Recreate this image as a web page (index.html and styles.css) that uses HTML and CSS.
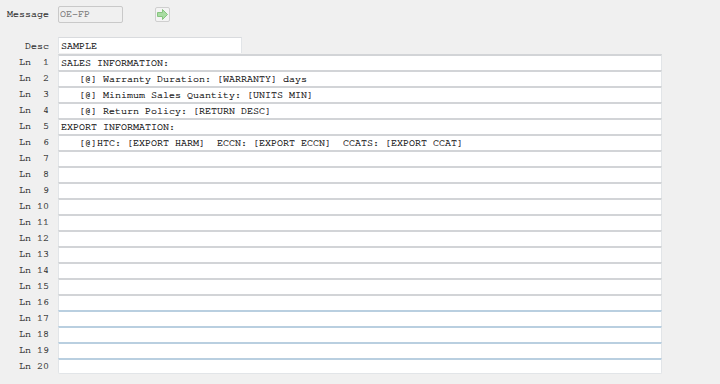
FILE: index.html
```html
<!DOCTYPE html>
<html>
<head>
<meta charset="utf-8">
<link rel="stylesheet" href="styles.css">
</head>
<body>
<div class="top">
  <span class="lbl">Message</span>
  <div class="msg">OE-FP</div>
  <div class="go"><svg width="13" height="13" viewBox="0 0 13 13"><path d="M1.5 4.5 H6.5 V1.5 L11.5 6.5 L6.5 11.5 V8.5 H1.5 Z" fill="#a9dca2" stroke="#86c47f" stroke-width="1"/></svg></div>
</div>
<div class="form">
  <span class="lbl desc-l">Desc</span>
  <div class="field desc">SAMPLE</div>
  <span class="lbl">Ln  1</span><div class="field">SALES INFORMATION:</div>
  <span class="lbl">Ln  2</span><div class="field">   [@] Warranty Duration: [WARRANTY] days</div>
  <span class="lbl">Ln  3</span><div class="field">   [@] Minimum Sales Quantity: [UNITS MIN]</div>
  <span class="lbl">Ln  4</span><div class="field">   [@] Return Policy: [RETURN DESC]</div>
  <span class="lbl">Ln  5</span><div class="field">EXPORT INFORMATION:</div>
  <span class="lbl">Ln  6</span><div class="field">   [@]HTC: [EXPORT HARM]  ECCN: [EXPORT ECCN]  CCATS: [EXPORT CCAT]</div>
  <span class="lbl">Ln  7</span><div class="field"></div>
  <span class="lbl">Ln  8</span><div class="field"></div>
  <span class="lbl">Ln  9</span><div class="field"></div>
  <span class="lbl">Ln 10</span><div class="field"></div>
  <span class="lbl">Ln 11</span><div class="field"></div>
  <span class="lbl">Ln 12</span><div class="field"></div>
  <span class="lbl">Ln 13</span><div class="field"></div>
  <span class="lbl">Ln 14</span><div class="field"></div>
  <span class="lbl">Ln 15</span><div class="field"></div>
  <span class="lbl">Ln 16</span><div class="field"></div>
  <span class="lbl">Ln 17</span><div class="field blue"></div>
  <span class="lbl">Ln 18</span><div class="field blue"></div>
  <span class="lbl">Ln 19</span><div class="field blue"></div>
  <span class="lbl">Ln 20</span><div class="field blue last"></div>
</div>
</body>
</html>
```
FILE: styles.css
```css
html, body {
  margin: 0;
  padding: 0;
  background: #f0f0f0;
}
body {
  font-family: "Nimbus Mono PS", "Nimbus Mono L", "FreeMono", "Courier New", "Liberation Mono", monospace;
  font-size: 10px;
  color: #111;
  -webkit-text-stroke: 0.22px currentColor;
  padding-top: 6px;
}
.top {
  display: flex;
  align-items: flex-start;
  height: 17px;
}
.lbl {
  width: 49px;
  text-align: right;
  white-space: pre;
  color: #2a2a2a;
  line-height: 16px;
}
.top .lbl {
  line-height: 17px;
}
.msg {
  margin-left: 9px;
  width: 65px;
  height: 17px;
  box-sizing: border-box;
  border: 1px solid #c9c9c9;
  border-radius: 2px;
  padding-left: 1px;
  line-height: 15px;
  color: #777;
}
.go {
  margin-left: 32px;
  margin-top: 1px;
  width: 15px;
  height: 15px;
  box-sizing: border-box;
  border: 1px solid #cfcfcf;
  border-radius: 2px;
  background: #f4f4f4;
  display: flex;
  align-items: center;
  justify-content: center;
}
.go svg {
  display: block;
}
.form {
  margin-top: 14px;
  display: grid;
  grid-template-columns: 49px 604px;
  grid-template-rows: 17px;
  column-gap: 9px;
  grid-auto-rows: 16px;
}
.form .lbl {
  line-height: 17px;
}
.form .desc-l {
  line-height: 19px;
}
.field {
  box-sizing: border-box;
  height: 16px;
  background: #fff;
  border-left: 1px solid #e2e5e8;
  border-right: 1px solid #e2e5e8;
  border-top: 2px solid #d2d4d7;
  padding-left: 2px;
  line-height: 14px;
  white-space: pre;
  overflow: hidden;
}
.desc {
  width: 184px;
  margin-bottom: 1px;
  height: 16px;
  border-top: 1px solid #d9dbde;
  padding-top: 2px;
  line-height: 13px;
}
.blue {
  border-top-color: #b9cfe0;
}
.last {
  border-bottom: 1px solid #e2e5e8;
  border-radius: 0 0 2px 2px;
}
```
